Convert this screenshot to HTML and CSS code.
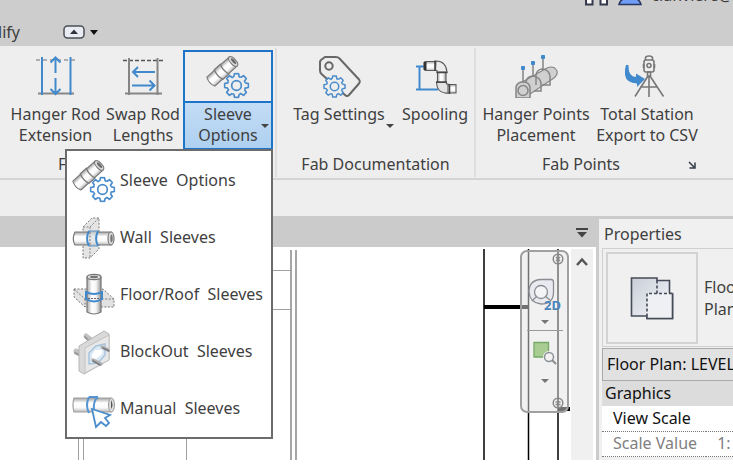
FILE: index.html
```html
<!DOCTYPE html>
<html lang="en">
<head>
<meta charset="utf-8">
<title>Fabrication ribbon</title>
<link rel="stylesheet" href="styles.css">
</head>
<body>
<svg class="defs" aria-hidden="true">
  <defs>
    <linearGradient id="pipe" x1="0" y1="0" x2="0" y2="1">
      <stop offset="0" stop-color="#a2a2a2"/><stop offset=".35" stop-color="#fff"/><stop offset=".7" stop-color="#fafafa"/><stop offset="1" stop-color="#b5b5b5"/>
    </linearGradient>
    <linearGradient id="pipe-v" x1="0" y1="0" x2="1" y2="0">
      <stop offset="0" stop-color="#a8a8a8"/><stop offset=".35" stop-color="#fff"/><stop offset=".65" stop-color="#f4f4f4"/><stop offset="1" stop-color="#959595"/>
    </linearGradient>
    <linearGradient id="sheet" x1="0" y1="0" x2="1" y2="1">
      <stop offset="0" stop-color="#c9ced8"/><stop offset="1" stop-color="#f7f8fa"/>
    </linearGradient>
    <path id="tooth" d="M8.6-2.7 11.9-2V2L8.6 2.7Q8.6 3.6 8 4.2"/>
    <symbol id="gear" viewBox="-13 -13 26 26">
      <g fill="none" stroke="#4a8ccb" stroke-width="1.7" stroke-linejoin="round">
        <use href="#tooth"/><use href="#tooth" transform="rotate(45)"/><use href="#tooth" transform="rotate(90)"/><use href="#tooth" transform="rotate(135)"/>
        <use href="#tooth" transform="rotate(180)"/><use href="#tooth" transform="rotate(225)"/><use href="#tooth" transform="rotate(270)"/><use href="#tooth" transform="rotate(315)"/>
        <circle r="4.8"/>
      </g>
    </symbol>
    <symbol id="sleeve" viewBox="0 0 46 46">
      <g transform="translate(17 17.5) rotate(-42)" stroke="#7a7a7a" stroke-width="1.1">
        <path d="M-15-6H15V6H-15Q-18 0-15-6z" fill="url(#pipe)"/>
        <path d="M-4.500-6.500H3.500Q1 0 3.500 6.500H-4.500Q-7 0-4.500-6.500z" fill="url(#pipe)" stroke-width="1.3"/>
        <ellipse cx="15" rx="2.800" ry="6" fill="#d8d8d8"/><ellipse cx="15.500" rx="1.200" ry="3.600" fill="#666" stroke="none"/>
      </g>
      <use href="#gear" x="18.500" y="18.500" width="26" height="26"/>
    </symbol>
  </defs>
</svg>

<header class="titlebar">
  <div class="account">
    <svg width="24" height="6" viewBox="0 0 24 6"><path d="M1-2V4.500H7.500V-2M15.500-2V4.500H22V-2" fill="#fff" stroke="#34384a" stroke-width="2"/></svg>
    <svg width="24" height="6" viewBox="0 0 24 6"><path d="M1 4.500Q2 0 7-2H17Q22 0 23 4.500z" fill="#6f9cf4" stroke="#29345f" stroke-width="1.5"/></svg>
    <span>clanviere@</span>
  </div>
  <nav class="tabs">
    <a class="tab" href="#modify">Modify</a>
    <button class="minimize" aria-label="Minimize ribbon"><svg width="22" height="14" viewBox="0 0 22 14"><rect x="1" y="1" width="20" height="12" rx="3.500" fill="#e9edf3" stroke="#4b5058" stroke-width="1.5"/><path d="M7 9H15L11 4.500z" fill="#30343c"/></svg></button>
    <button class="minimize" aria-label="Ribbon display"><svg width="8" height="5" viewBox="0 0 8 5"><path d="M0 0H8L4 5z" fill="#111"/></svg></button>
  </nav>
</header>

<section class="ribbon">
  <div class="group group-hangers">
    <div class="tools">
      <button class="tool hanger-rod">
        <svg width="44" height="44" viewBox="34 54 44 44" fill="none">
          <path d="M36 60H76" stroke="#999" stroke-width="1.7" stroke-dasharray="4 3"/>
          <path d="M38 93.500H74" stroke="#888" stroke-width="2"/>
          <path d="M42 57V95M70.500 57V95M55.500 73V58M50.500 62.500 55.500 57.500 60.500 62.500M55.500 78V94M50.500 89 55.500 94 60.500 89" stroke="#4189cd" stroke-width="2"/>
        </svg>
        <span>Hanger Rod<br>Extension</span>
      </button>
      <button class="tool swap-rod">
        <svg width="44" height="44" viewBox="121 54 44 44" fill="none">
          <path d="M123 60.500H164" stroke="#555" stroke-width="1.5" stroke-dasharray="4 2"/>
          <path d="M129 58V95M157.500 58V95M125 93.500H162" stroke="#858585" stroke-width="2"/>
          <path d="M155 72H133M138 67 133 72 138 77M132 85.500H154M149.500 80.500 154.500 85.500 149.500 90.500" stroke="#4189cd" stroke-width="2"/>
        </svg>
        <span>Swap Rod<br>Lengths</span>
      </button>
      <div class="split">
        <button class="tool split-button" aria-expanded="true">
          <span class="split-icon"><svg width="46" height="46"><use href="#sleeve"/></svg></span>
          <span class="split-text">Sleeve<br>Options<i class="caret"></i></span>
        </button>
        <div class="menu" role="menu">
          <button role="menuitem"><svg width="46" height="46"><use href="#sleeve"/></svg><span>Sleeve&nbsp; Options</span></button>
          <button role="menuitem">
            <svg width="46" height="46" viewBox="0 0 46 46">
              <path d="M12 12 21 3H28V34L19 43H12z" fill="#e4e4e4" stroke="#777" stroke-dasharray="2 1.5"/>
              <path d="M12 12H19L28 3M19 12V43" fill="none" stroke="#888" stroke-dasharray="2 1.5"/>
              <path d="M4 17H40V30H4Q.500 23.500 4 17z" fill="url(#pipe)" stroke="#777" stroke-width="1.2"/>
              <ellipse cx="40" cy="23.500" rx="3" ry="6.500" fill="#ddd" stroke="#777" stroke-width="1.2"/><ellipse cx="40.500" cy="23.500" rx="1.200" ry="4" fill="#777"/>
              <path d="M17 16.500H27V30.500H17z" fill="#dcdfe2" opacity=".7"/>
              <path d="M18 16Q14 23.500 18 31M27 16Q23 23.500 27 31" fill="none" stroke="#4189cd" stroke-width="2"/><path d="M18 16H27M18 31H27" stroke="#5e96cb" stroke-width="1.2"/><path d="M19 17V30" stroke="#777" stroke-dasharray="2 1.5"/>
            </svg><span>Wall&nbsp; Sleeves</span></button>
          <button role="menuitem">
            <svg width="46" height="46" viewBox="0 0 46 46">
              <path d="M3 17H32L43 27V35H14L3 25z" fill="#e2e2e2" stroke="#777" stroke-dasharray="2 1.5"/>
              <path d="M3 17 14 27H43M14 27V35" fill="none" stroke="#777" stroke-dasharray="2 1.5"/>
              <path d="M16 5V40Q23 44 30 40V5z" fill="url(#pipe-v)" stroke="#777" stroke-width="1.2"/>
              <ellipse cx="23" cy="5" rx="7" ry="2.700" fill="#ddd" stroke="#777" stroke-width="1.2"/><ellipse cx="23" cy="5" rx="4" ry="1.200" fill="#777"/>
              <path d="M15 20Q23 24 31 20V27Q23 32 15 27z" fill="none" stroke="#4189cd" stroke-width="2"/><path d="M17 26.500H30" stroke="#667" stroke-dasharray="2 1"/>
            </svg><span>Floor/Roof&nbsp; Sleeves</span></button>
          <button role="menuitem">
            <svg width="46" height="46" viewBox="0 0 46 46">
              <g stroke="#c2c2c2" stroke-width="5" stroke-linecap="round"><path d="M15 7 20 11M5 22 11 25"/></g>
              <g stroke="#9a9a9a" stroke-width="2" stroke-linecap="round"><path d="M14 8 18 12M4 24 8 26"/></g>
              <path d="M8 17 33 2 38 5V31L13 45 8 42z" fill="#d9d9d9" stroke="#b5b5b5"/>
              <path d="M14 19 38 6V31L14 44z" fill="#e8e8e8" stroke="#c2c2c2"/>
              <path d="M18 24 25 17 34 15V26L27 34 18 35z" fill="#dce8f3" stroke="#a8c4de" stroke-width="1.5"/><path d="M21 26 24 21H31V25L25 30H21z" fill="#fff"/>
              <path d="M31 18 37 21M22 31 30 35" stroke="#b0b0b0" stroke-width="3.500" stroke-linecap="round"/>
              <path d="M32 19 38 22M22 32 29 36" stroke="#777b80" stroke-width="1.5" stroke-linecap="round"/>
            </svg><span>BlockOut&nbsp; Sleeves</span></button>
          <button role="menuitem">
            <svg width="46" height="46" viewBox="0 0 46 46">
              <path d="M3 12H40V26H3Q1 19 3 12z" fill="url(#pipe)" stroke="#a0a0a0" stroke-width="1.2"/>
              <ellipse cx="40.500" cy="19" rx="3" ry="7" fill="#ddd" stroke="#999"/><path d="M40 14Q43 19 40 23z" fill="#555"/>
              <path d="M18 11Q14 19 18 27M27 11Q22 15 23 24M18 11H27" fill="none" stroke="#5495d2" stroke-width="2"/>
              <path d="M21 23 25 41 30 36 35 40 38 37 34 32 39 29z" fill="#fff" stroke="#4a8ccb" stroke-width="1.8"/>
            </svg><span>Manual&nbsp; Sleeves</span></button>
        </div>
      </div>
    </div>
    <div class="group-label">F</div>
  </div>

  <div class="group group-docs">
    <div class="tools">
      <button class="tool tag-settings">
        <svg width="44" height="44" viewBox="316 54 44 44" fill="none">
          <path d="M324 57H335Q337 57 338.500 58.500L358 79.500Q359.500 81.500 358 83.500L348 95Q346 97 344 95L320.500 74Q319 72.500 319 70.500V62Q319 61 320 60Z" stroke="#686868" stroke-width="2"/>
          <circle cx="328" cy="66" r="3.700" stroke="#686868" stroke-width="2"/>
          <circle cx="333.500" cy="86.500" r="10" fill="#eee"/>
          <use href="#gear" x="322" y="75" width="23" height="23"/>
        </svg>
        <span>Tag Settings</span><i class="caret"></i>
      </button>
      <button class="tool spooling">
        <svg width="44" height="44" viewBox="413 54 44 44">
          <path d="M416 66.500H424M416 89.500H438M419.500 67V89" fill="none" stroke="#4189cd" stroke-width="2"/>
          <g stroke="#5a5a5a" stroke-width="1.1">
            <path d="M425 61.500H436V70.500H425z" fill="url(#pipe)"/>
            <path d="M446 84.500H456V93H446z" fill="url(#pipe)"/>
            <path d="M437.500 72H446V83H437.500z" fill="url(#pipe-v)"/>
            <path d="M436 61Q446 61 447 72H437V70.500H435.500z" fill="#ececec"/>
            <path d="M436.500 82.500H446.500V84H448V93H445Q437 92 436.500 82.500z" fill="#e2e2e2"/>
            <path d="M449.500 84V94M435 60.500V71M436.500 72.500H447.500M436 82H447" fill="none" stroke="#444" stroke-width="1.6"/><path d="M425 62V70" stroke="#333" stroke-width="3"/>
          </g>
        </svg>
        <span>Spooling</span>
      </button>
    </div>
    <div class="group-label">Fab Documentation</div>
  </div>

  <div class="group group-points">
    <div class="tools">
      <button class="tool hanger-points">
        <svg width="44" height="44" viewBox="515 54 44 44" fill="none" stroke="#858585" stroke-width="1.5">
          <path d="M518 85 548 68Q555 65 558 71Q559 75 555 78L528 96" fill="#d0d0d0" stroke-width="1.1"/>
          <path d="M537 85V75Q538 69 544 69Q550 70 551 76V85H543M527 91V82Q528 76 534 76Q541 77 542 83V91H535"/>
          <path d="M517 98V87Q518 82 524 82Q530 82 531 87V98z" fill="#d0d0d0"/><circle cx="524" cy="90.500" r="5"/>
          <path d="M524 82V69M534 77V64M544 70V58"/>
          <path d="M522.500 66.500H525.500V69.500H522.500zM532.500 61.500H535.500V64.500H532.500zM542.500 55.500H545.500V58.500H542.500z" fill="#4189cd" stroke="#4189cd" stroke-width="1"/>
        </svg>
        <span>Hanger Points<br>Placement</span>
      </button>
      <button class="tool total-station">
        <svg width="44" height="44" viewBox="626 54 44 44" fill="none" stroke="#777" stroke-width="1.6">
          <path d="M627 65Q622 83 638 83.500V87L646 79 637 73.500V77Q629 77 629.500 65z" fill="#4189cd" stroke="none"/>
          <rect x="645" y="60" width="10" height="12" rx="2"/><path d="M646.500 60V58Q646.500 56 650 56Q653.500 56 653.500 58V60M644.500 64V68M655.500 64V68"/><circle cx="650" cy="65.500" r="2"/>
          <path d="M648.500 72H651.500V76H648.500zM649 76 636 96.500M651 76 664.500 96.500M650 76V97M641 87H659"/>
        </svg>
        <span>Total Station<br>Export to CSV</span>
      </button>
    </div>
    <div class="group-label">Fab Points
      <button class="launcher" aria-label="Fab Points settings"><svg width="8" height="8" viewBox="0 0 8 8" fill="none" stroke="#333c48" stroke-width="1.5"><path d="M1 1 6 6M7 1.500V7H1.500"/></svg></button>
    </div>
  </div>
</section>
<div class="options-bar"></div>

<main class="workspace">
  <section class="view">
    <div class="view-tabs"><button aria-label="View list"><svg width="12" height="10" viewBox="0 0 12 10"><path d="M0 0H12V2H0zM1 4H11L6 9.500z" fill="#444"/></svg></button></div>
    <div class="view-body">
      <div class="canvas">
        <svg class="plan" width="570" height="211" viewBox="0 249 570 211" aria-label="Floor plan">
          <path d="M291 250V460M296 250V460" stroke="#a6a6a6" stroke-width="2"/>
          <path d="M272 270.500H291M272 309.500H291M78.500 438V460M83.500 438V460M186.500 438V460" stroke="#a0a0a0" fill="none"/>
          <path d="M484 249V460M528.500 249V460M558 249V460" stroke="#000" stroke-width="1.5"/>
          <path d="M484 307H528M558 409H570" stroke="#000" stroke-width="4"/>
        </svg>
        <div class="navbar">
          <button class="nav-close" aria-label="Close"><svg width="12" height="12" viewBox="0 0 12 12" fill="none" stroke="#888" stroke-width="1.5"><circle cx="6" cy="6" r="4.800"/><path d="M4 4 8 8M8 4 4 8"/></svg></button>
          <button aria-label="Steering wheel">
            <svg class="wheel" width="34" height="34" viewBox="528 279 34 34" fill="none" stroke="#8b8d92" stroke-width="1.3">
              <path d="M541 280.500H551Q553.500 280.500 553.500 283V294Q553 305 541 305Q530 304 529 293Q529 281 541 280.500z" fill="#e8eaf0"/><circle cx="541" cy="293" r="6.500" fill="#f4f4f6"/><path d="M537 297 532 302M545 297 550 301"/>
              <text x="544" y="311" class="two-d">2D</text>
            </svg></button>
          <i class="nav-caret"></i>
          <hr>
          <button aria-label="Zoom">
            <svg width="24" height="24" viewBox="533 342 24 24" fill="none"><path d="M534 343.500H548.500V358H534z" fill="#a8cc92" stroke="#76a967" stroke-width="1.3"/><circle cx="549" cy="358" r="6" fill="#f2f2f2"/><circle cx="549" cy="358" r="4.500" stroke="#8b9098" stroke-width="1.5"/><path d="M552 361 556 365" stroke="#8b8b8b" stroke-width="2"/></svg></button>
          <i class="nav-caret"></i>
          <button class="nav-more" aria-label="Customize"><svg width="12" height="12" viewBox="0 0 12 12" fill="none" stroke="#888" stroke-width="1.5"><circle cx="6" cy="6" r="4.800"/><path d="M3.500 5H8.500M3.500 7.500H8.500"/></svg></button>
        </div>
      </div>
      <div class="scrollbar"><button aria-label="Scroll up"><svg width="12" height="10" viewBox="0 0 12 10"><path d="M1 8 6 2.500 11 8" fill="none" stroke="#555" stroke-width="2.5"/></svg></button></div>
    </div>
  </section>

  <aside class="properties">
    <h2>Properties</h2>
    <div class="type">
      <button class="preview" aria-label="Type preview">
        <svg width="44" height="44" viewBox="630 273 44 44" stroke="#454b57" stroke-width="1.6" fill="url(#sheet)">
          <path d="M631.500 275H657V277.500H669.500V290.500H672.500V315.500H647V313H631.500z"/><path d="M647 290.500H672.500V315.500H647z" stroke="none" fill="#eef0f4"/>
          <path d="M672.500 290.500V315.500H647V313" fill="none"/><path d="M657 277.500V290.500M672 290.500H647V313" fill="none" stroke-dasharray="3 2"/>
        </svg>
      </button>
      <span>Floor<br>Plan</span>
    </div>
    <button class="instance">Floor Plan: LEVEL</button>
    <table>
      <thead><tr><th colspan="2">Graphics</th></tr></thead>
      <tbody>
        <tr><td>View Scale</td><td></td></tr>
        <tr class="readonly"><td>Scale Value</td><td>1:</td></tr>
      </tbody>
    </table>
  </aside>
</main>
</body>
</html>
```
FILE: styles.css
```css
* { box-sizing: border-box; }
body {
  margin: 0;
  min-height: 100vh;
  padding-bottom: 11px;
  display: flex;
  flex-direction: column;
  overflow: hidden;
  background: #fff;
  color: #3f3f3f;
  font: 16px/21px "Noto Sans", "Open Sans", sans-serif;
}
button {
  margin: 0;
  padding: 0;
  border: 0;
  background: none;
  color: inherit;
  font: inherit;
}
svg { display: block; flex: none; }
.defs { position: absolute; width: 0; height: 0; }

.titlebar { background: #cdcdcd; height: 46px; }
.account {
  display: flex;
  align-items: flex-end;
  justify-content: flex-end;
  gap: 9px;
  height: 6px;
  overflow: hidden;
}
.tabs { display: flex; align-items: center; height: 40px; padding-top: 12px; }
.tab {
  display: flex;
  justify-content: flex-end;
  width: 20px;
  margin-right: 43px;
  overflow: hidden;
  color: inherit;
  text-decoration: none;
}
.minimize { margin-right: 5px; }

.ribbon {
  display: flex;
  height: 134px;
  padding-top: 2px;
  background: #eee;
  border-bottom: 2px solid #d4d4d4;
}
.group { border-right: 2px solid #dedede; height: 129px; }
.group-hangers { width: 277px; padding-left: 8px; }
.group-docs { width: 199px; padding-left: 12px; }
.group-points { padding-left: 4px; border-right: 0; }
.tools { display: flex; height: 106px; padding-top: 2px; }
.tool {
  position: relative;
  flex: none;
  display: flex;
  flex-direction: column;
  align-items: center;
  gap: 6px;
  padding-top: 4px;
  white-space: nowrap;
}
.hanger-rod { width: 95px; }
.swap-rod { width: 80px; }
.tag-settings { width: 100px; margin-right: 8px; }
.spooling { width: 76px; }
.hanger-points { width: 112px; }
.total-station { width: 110px; }
.caret {
  position: absolute;
  right: 2px;
  bottom: 20px;
  border: 4px solid transparent;
  border-top-color: #444;
  border-bottom: 0;
}
.tag-settings .caret { right: -5px; bottom: 26px; }
.group-label {
  display: flex;
  align-items: center;
  justify-content: center;
  position: relative;
  height: 21px;
}
.group-hangers .group-label { justify-content: flex-start; padding-left: 50px; }
.group-docs .group-label { padding-right: 12px; }
.group-points .group-label { width: 202px; }
.launcher { position: absolute; right: -14px; top: 7px; }

.split { position: relative; width: 90px; }
.split-button {
  width: 100%;
  height: 100px;
  padding: 0;
  gap: 0;
  border: 2px solid #1e74c9;
  align-items: stretch;
}
.split-icon {
  display: flex;
  justify-content: center;
  height: 51px;
  padding-top: 2px;
  border-bottom: 2px solid #1e74c9;
}
.split-text { flex: 1; padding-top: 1px; background: linear-gradient(#c3dcf5, #aed0f0); }

.menu {
  position: absolute;
  z-index: 2;
  top: 99px;
  right: 0;
  width: 208px;
  padding-top: 1px;
  border: 2px solid #6c6c6c;
  background: #fff;
}
.menu button {
  display: flex;
  align-items: center;
  gap: 3px;
  width: 100%;
  height: 57px;
  padding-left: 4px;
  white-space: nowrap;
}

.options-bar { height: 36px; background: #eee; }

.workspace { flex: 1; display: flex; min-height: 0; overflow: hidden; }
.view { flex: 1; display: flex; flex-direction: column; min-width: 0; }
.view-tabs {
  display: flex;
  align-items: center;
  justify-content: flex-end;
  height: 31px;
  padding: 3px 8px 0 0;
  background: #cbcbcb;
}
.view-body { flex: 1; display: flex; padding: 2px 3px 0 0; }
.canvas { position: relative; flex: 1; min-width: 0; }
.scrollbar {
  display: flex;
  justify-content: center;
  align-items: flex-start;
  width: 22px;
  padding-top: 8px;
  background: #f0f0f0;
}
.navbar {
  position: absolute;
  top: 1px;
  right: 2px;
  display: flex;
  flex-direction: column;
  align-items: center;
  width: 49px;
  height: 163px;
  padding-top: 26px;
  border: 2px solid #a0a0a0;
  border-radius: 7px;
  background: rgba(228, 228, 228, .5);
}
.nav-close, .nav-more { position: absolute; right: 3px; }
.nav-close { top: 1px; }
.nav-more { bottom: 2px; }
.nav-caret {
  margin: 8px 0 0;
  border: 4px solid transparent;
  border-top-color: #777;
  border-bottom: 0;
}
.navbar hr { width: 36px; margin: 6px 0 10px; border: 0; border-top: 1px solid #999; }
.navbar hr ~ .nav-caret { margin-top: 14px; }
.wheel { overflow: visible; }
.two-d { fill: #4c83bd; stroke: none; font: bold 13px "Noto Sans", sans-serif; }

.properties {
  width: 137px;
  padding: 0 0 0 3px;
  overflow: hidden;
  border-left: 3px solid #cbcbcb;
  border-top: 3px solid #cbcbcb;
  background: #f0f0f0;
  white-space: nowrap;
}
.properties h2 { margin: 0; padding: 5px 2px 3px; font: inherit; }
.type {
  display: flex;
  align-items: center;
  gap: 6px;
  height: 99px;
  padding-left: 3px;
  border: 1px solid #d0d0d0;
  border-right: 0;
  line-height: 22px;
}
.preview {
  flex: none;
  display: flex;
  align-items: center;
  justify-content: center;
  width: 92px;
  height: 92px;
  border: 2px solid #d3d3d3;
}
.instance {
  width: 100%;
  height: 33px;
  margin-top: 1px;
  padding-left: 4px;
  border: 1px solid #a9a9a9;
  border-right: 0;
  background: #e1e1e1;
  color: #111;
  text-align: left;
}
table { width: 100%; border-collapse: collapse; background: #fff; color: #111; }
th { height: 25px; padding: 0 3px; background: #dcdcdc; font-weight: 400; text-align: left; }
td { height: 25px; padding: 0 0 0 11px; border-bottom: 1px dotted #777; }
.readonly { color: #808080; }
```
